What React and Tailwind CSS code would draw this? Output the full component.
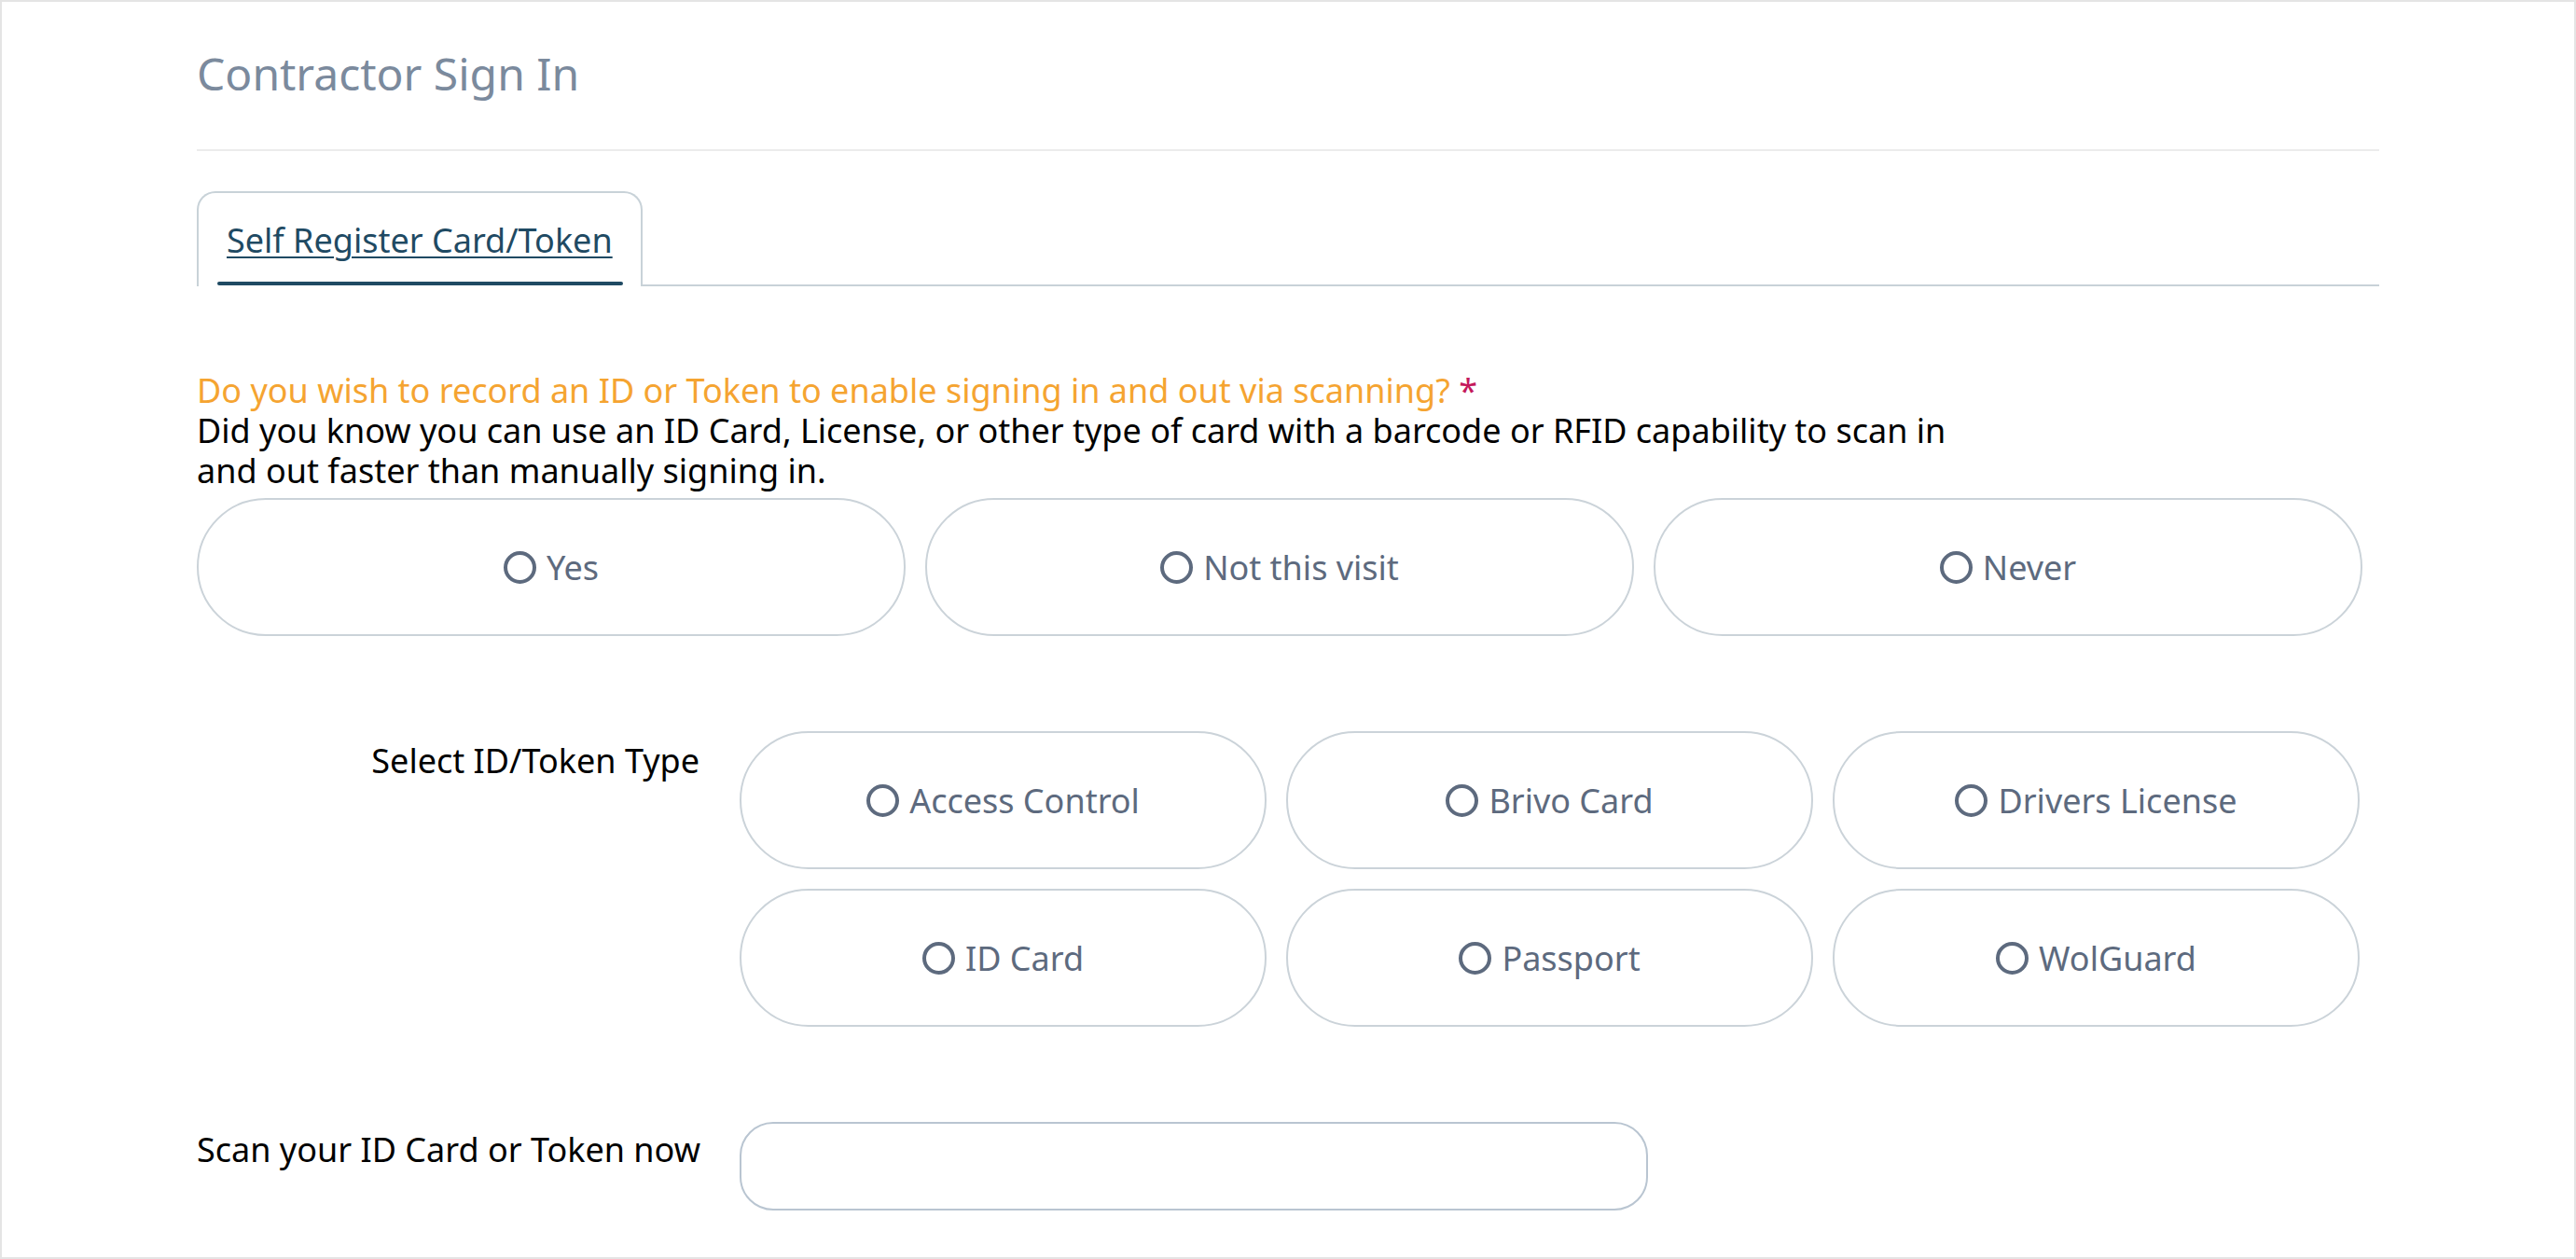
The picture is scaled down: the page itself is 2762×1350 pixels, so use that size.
import React from "react";

function Radio({ label }) {
  return (
    <div className="flex h-[148px] items-center justify-center rounded-full border-2 border-[#cbd3d9] bg-white">
      <span className="mr-[11px] inline-block h-[35px] w-[35px] shrink-0 rounded-full border-4 border-[#5d6a7e]" />
      <span className="text-[36px] leading-[43px] text-[#5d6a7e]">{label}</span>
    </div>
  );
}

export default function App() {
  return (
    <div className="h-[1350px] w-full overflow-hidden border-2 border-[#e4e4e4] bg-white font-['Noto_Sans',sans-serif]">
      <div className="mx-[209px]">
        <h1 className="pt-[48px] text-[48px] font-normal leading-[58px] text-[#7b8a9d]">
          Contractor Sign In
        </h1>
        <div className="mt-[52px] border-t-2 border-[#ececec]" />

        <div className="mt-[43px] flex items-end">
          <div className="relative flex h-[102px] w-[478px] items-start rounded-t-[20px] border-2 border-b-0 border-[#c8d2d8] bg-white px-[30px] pt-[29px]">
            <span className="whitespace-nowrap text-[36px] leading-[43px] text-[#1f4a63] underline decoration-2 underline-offset-[4px]">
              Self Register Card/Token
            </span>
            <span className="absolute bottom-[1px] left-[20px] right-[19px] h-[4px] rounded-full bg-[#1f4a63]" />
          </div>
          <div className="flex-1 border-b-2 border-[#c8d2d8]" />
        </div>

        <div className="mt-[90px] text-[36px] leading-[43px] text-[#f5a431]">
          Do you wish to record an ID or Token to enable signing in and out via scanning?{" "}
          <span className="text-[#c4195b]">*</span>
        </div>
        <p className="text-[36px] leading-[43px] text-black">
          Did you know you can use an ID Card, License, or other type of card with a barcode or RFID capability to scan in
          <br />
          and out faster than manually signing in.
        </p>

        <div className="mt-[8px] grid w-[2322px] grid-cols-3 gap-[21px]">
          <Radio label="Yes" />
          <Radio label="Not this visit" />
          <Radio label="Never" />
        </div>

        <div className="mt-[102px] flex items-start gap-[43px]">
          <div className="w-[539px] shrink-0 pt-[10px] text-right text-[36px] leading-[43px] text-black">
            Select ID/Token Type
          </div>
          <div className="grid w-[1737px] grid-cols-3 gap-[21px]">
            <Radio label="Access Control" />
            <Radio label="Brivo Card" />
            <Radio label="Drivers License" />
            <Radio label="ID Card" />
            <Radio label="Passport" />
            <Radio label="WolGuard" />
          </div>
        </div>

        <div className="mt-[102px] flex items-start gap-[43px]">
          <div className="w-[539px] shrink-0 whitespace-nowrap pt-[8px] text-right text-[36px] leading-[43px] text-black">
            Scan your ID Card or Token now
          </div>
          <input
            type="text"
            className="h-[95px] w-[974px] rounded-[36px] border-2 border-[#b9c5d1] bg-white px-[30px] text-[36px] outline-none"
          />
        </div>
      </div>
    </div>
  );
}
